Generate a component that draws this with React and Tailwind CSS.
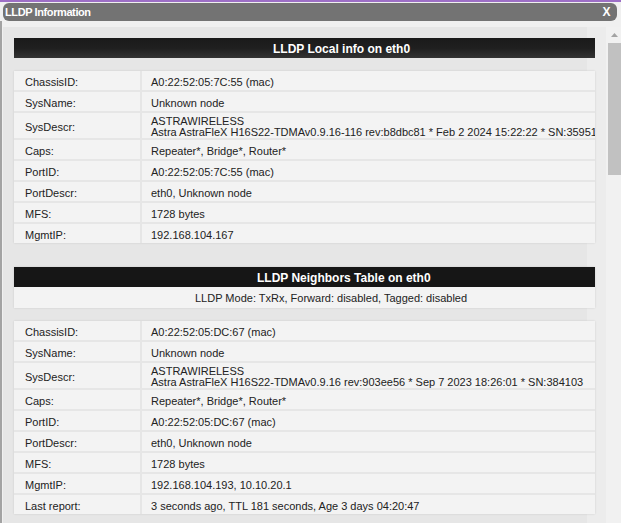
import React from "react";

const localInfo = [
  ["ChassisID:", "A0:22:52:05:7C:55 (mac)"],
  ["SysName:", "Unknown node"],
  ["SysDescr:", ["ASTRAWIRELESS", "Astra AstraFleX H16S22-TDMAv0.9.16-116 rev:b8dbc81 * Feb 2 2024 15:22:22 * SN:359512"]],
  ["Caps:", "Repeater*, Bridge*, Router*"],
  ["PortID:", "A0:22:52:05:7C:55 (mac)"],
  ["PortDescr:", "eth0, Unknown node"],
  ["MFS:", "1728 bytes"],
  ["MgmtIP:", "192.168.104.167"],
];

const neighbor = [
  ["ChassisID:", "A0:22:52:05:DC:67 (mac)"],
  ["SysName:", "Unknown node"],
  ["SysDescr:", ["ASTRAWIRELESS", "Astra AstraFleX H16S22-TDMAv0.9.16 rev:903ee56 * Sep 7 2023 18:26:01 * SN:384103"]],
  ["Caps:", "Repeater*, Bridge*, Router*"],
  ["PortID:", "A0:22:52:05:DC:67 (mac)"],
  ["PortDescr:", "eth0, Unknown node"],
  ["MFS:", "1728 bytes"],
  ["MgmtIP:", "192.168.104.193, 10.10.20.1"],
  ["Last report:", "3 seconds ago, TTL 181 seconds, Age 3 days 04:20:47"],
];

function InfoTable({ rows }) {
  return (
    <div className="flex flex-col gap-[2px] bg-[#e6e6e6] shadow-[0_0_2px_rgba(0,0,0,0.12)]">
      {rows.map(([label, value]) => {
        const multi = Array.isArray(value);
        return (
          <div key={label} className={`flex gap-[2px] ${multi ? "h-[25px]" : "h-[19px]"}`}>
            <div className="flex w-[126px] shrink-0 items-center bg-[#f3f3f3] pt-[3px] pl-[11px]">{label}</div>
            <div className="flex min-w-0 flex-1 flex-col justify-center overflow-hidden whitespace-nowrap bg-[#f3f3f3] pt-[3px] pl-[9px]">
              {multi ? (
                value.map((line) => (
                  <div key={line} className="leading-[11px]">
                    {line}
                  </div>
                ))
              ) : (
                <div>{value}</div>
              )}
            </div>
          </div>
        );
      })}
    </div>
  );
}

export default function App() {
  return (
    <div className="flex h-[523px] w-[621px] flex-col overflow-hidden bg-[#f0f0f0] font-['Liberation_Sans',Arial,sans-serif] text-[11px] text-[#222]">
      <div className="h-[2px] shrink-0 bg-[#9d6fc6]" />
      <div className="flex min-h-0 flex-1">
        <div className="mt-[19px] w-[2px] shrink-0 bg-[#a3a3a3]" />
        <div className="flex min-w-0 flex-1 flex-col pl-[1px]">
          {/* title bar */}
          <div className="mt-[1px] mr-[4px] flex h-[18px] shrink-0 items-center justify-between rounded-[6px] bg-[#737373] px-[2px] text-[11px] font-bold tracking-[-0.4px] text-white">
            <span>LLDP Information</span>
            <span className="mr-[5px] text-[12px]">X</span>
          </div>

          <div className="mt-[6px] flex min-h-0 flex-1">
            <div className="flex-1 overflow-hidden bg-[#ececec]">
              <div className="min-h-full w-[584px] bg-[#e6e6e6] px-[11px] pt-[11px]">
                <div className="w-[581px]">
                  <div className="flex h-[20px] items-center bg-linear-to-b from-[#1a1a1a] via-[#1f1f1f] to-[#333333] pt-[2px] pl-[259px] text-[12px] font-bold text-white">
                    LLDP Local info on eth0
                  </div>
                  <div className="mt-[13px]">
                    <InfoTable rows={localInfo} />
                  </div>

                  <div className="mt-[24px] shadow-[0_0_2px_rgba(0,0,0,0.12)]">
                    <div className="flex h-[20px] items-center bg-[#161616] pt-[2px] pl-[243px] text-[12px] font-bold text-white">
                      LLDP Neighbors Table on eth0
                    </div>
                    <div className="flex h-[21px] items-center bg-[#f3f3f3] pt-[2px] pl-[181px]">
                      LLDP Mode: TxRx, Forward: disabled, Tagged: disabled
                    </div>
                  </div>
                  <div className="mt-[13px]">
                    <InfoTable rows={neighbor} />
                  </div>
                </div>
              </div>
            </div>

            {/* scrollbar */}
            <div className="flex w-[15px] shrink-0 flex-col bg-[#f1f1f1]">
              <div className="flex h-[16px] items-center justify-center pl-[2px]">
                <svg width="7" height="4" viewBox="0 0 7 4">
                  <polygon points="0,4 3.5,0 7,4" fill="#a3a3a3" />
                </svg>
              </div>
              <div className="ml-[2px] h-[132px] bg-[#c1c1c1]" />
            </div>
          </div>
        </div>
      </div>
    </div>
  );
}
